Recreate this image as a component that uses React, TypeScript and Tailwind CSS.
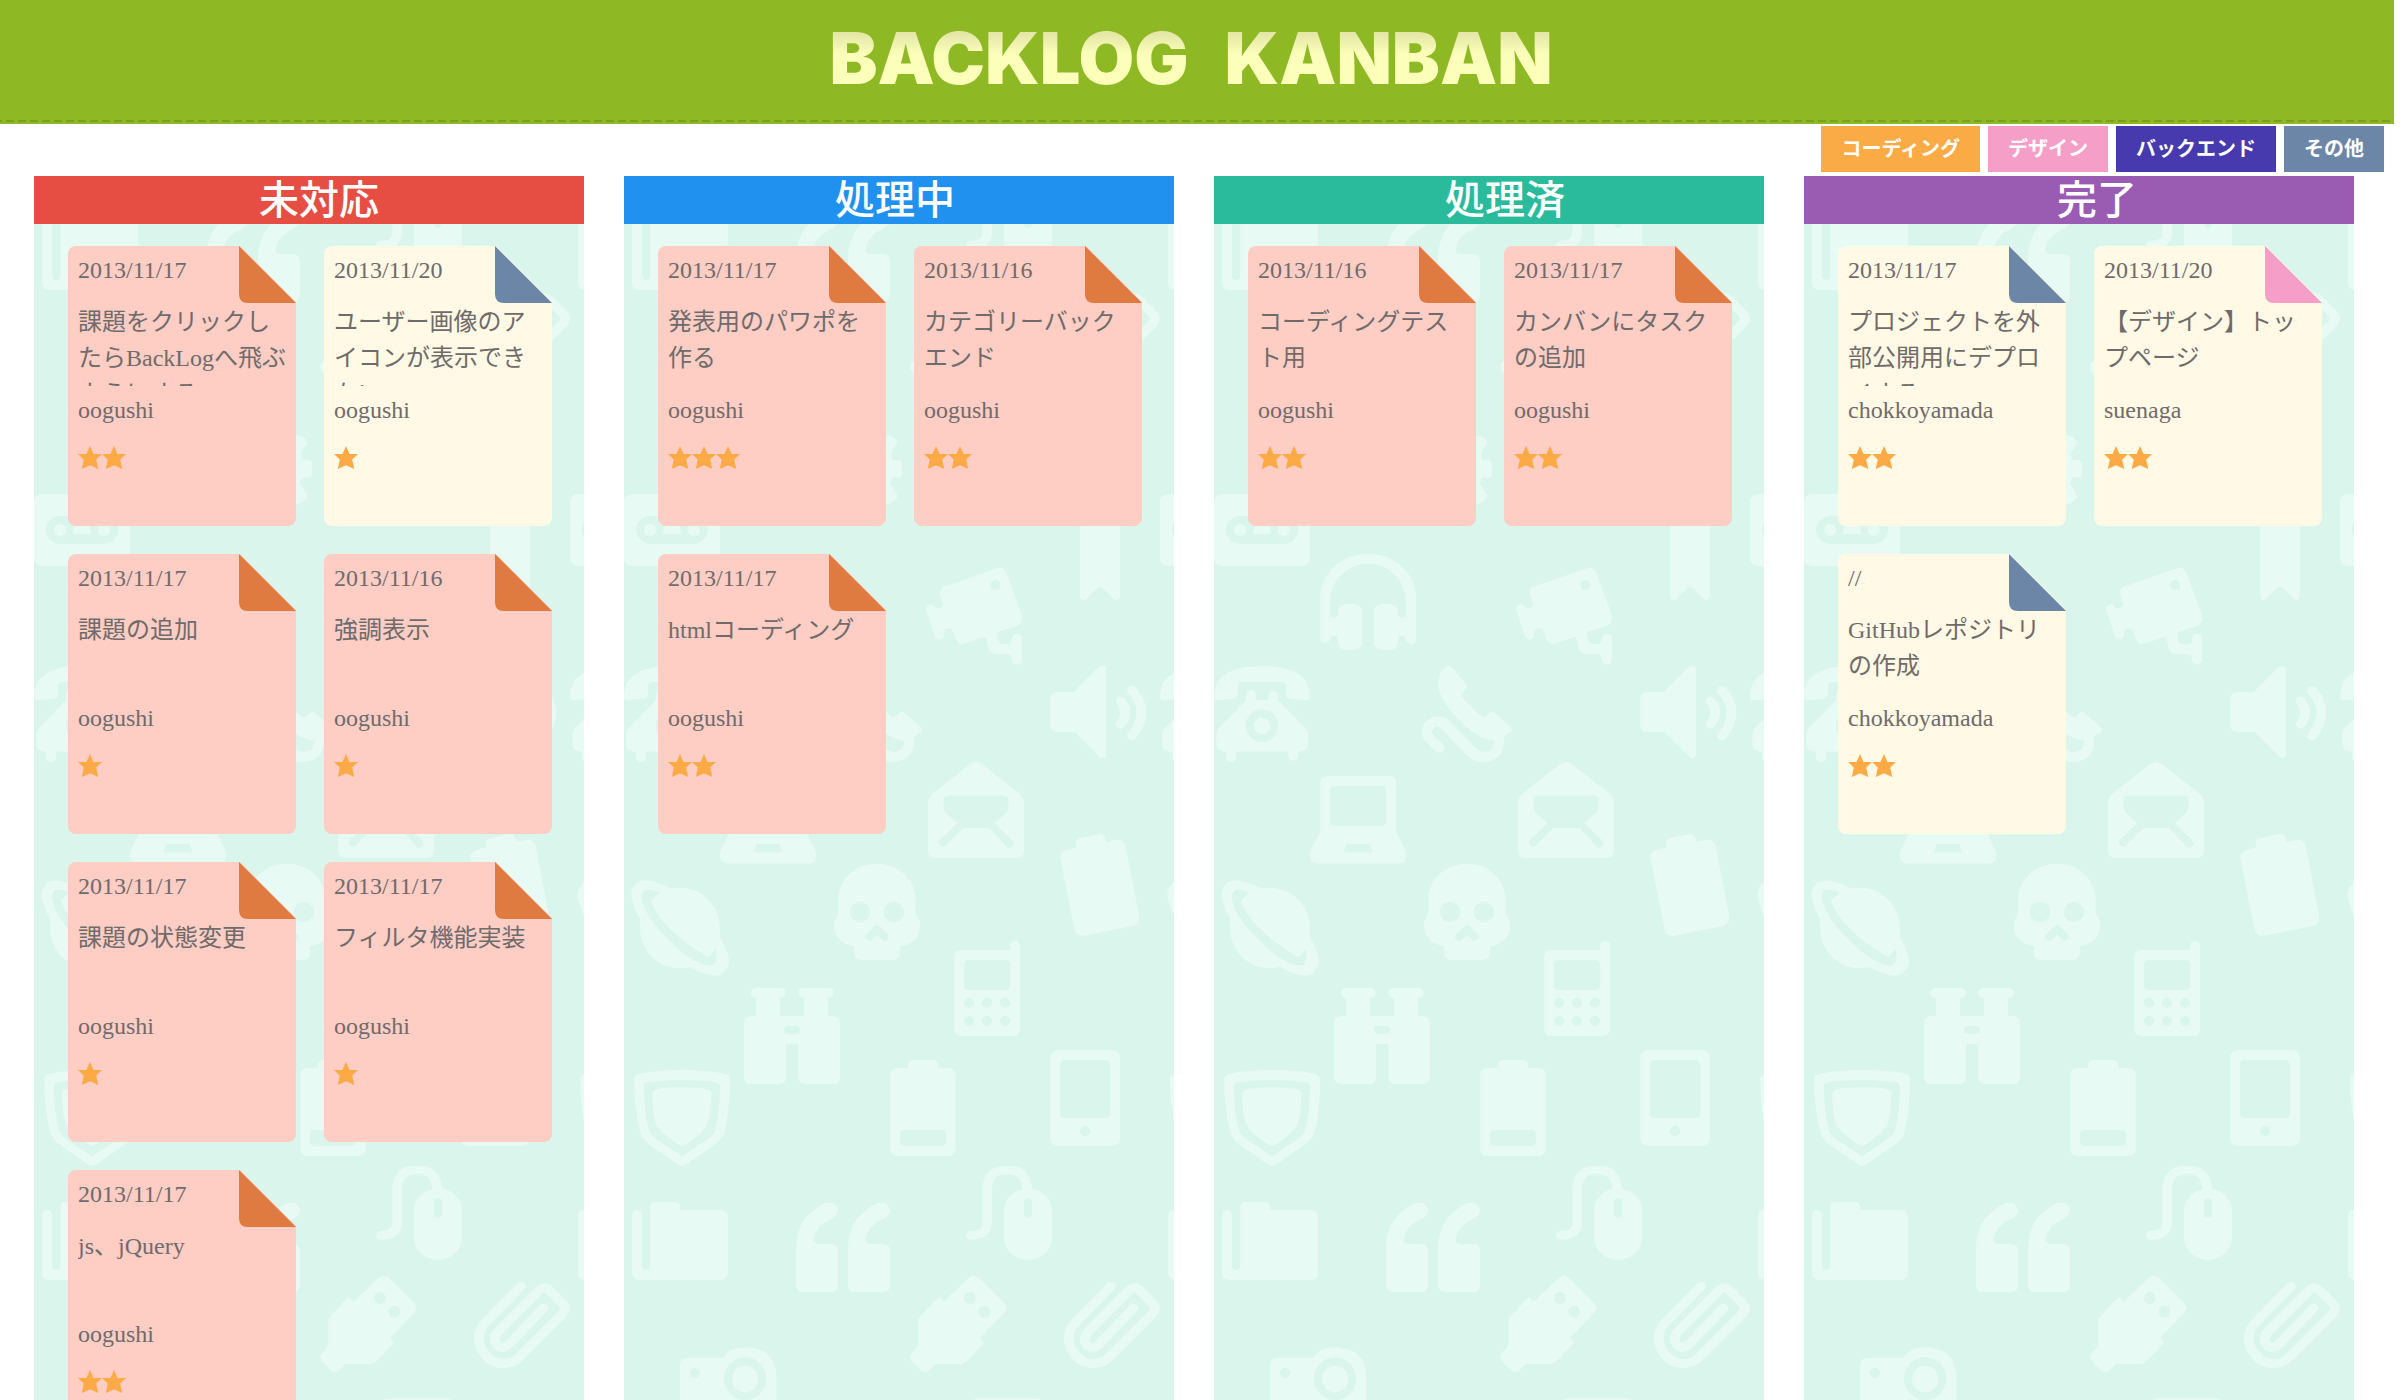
type Category = "backend" | "design" | "other";

type Task = {
  date: string;
  title: string;
  owner: string;
  stars: number;
  tone: "pink" | "cream";
  category: Category;
};

type ColumnData = { name: string; heading: string; tasks: Task[] };

const LIGHT = "#e8faf4";
const MINT = "#d9f5ec";

const foldColors: Record<Category, string> = {
  backend: "#df7a41",
  design: "#f59ec8",
  other: "#6c86a7",
};

const filters = [
  { label: "コーディング", color: "bg-[#fbab46]" },
  { label: "デザイン", color: "bg-[#f59ec8]" },
  { label: "バックエンド", color: "bg-[#463aae]" },
  { label: "その他", color: "bg-[#6c86a7]" },
];

function task(
  date: string,
  title: string,
  owner: string,
  stars: number,
  tone: Task["tone"] = "pink",
  category: Category = "backend",
): Task {
  return { date, title, owner, stars, tone, category };
}

const columns: ColumnData[] = [
  {
    name: "未対応",
    heading: "bg-[#e64d43] pl-5",
    tasks: [
      task("2013/11/17", "課題をクリックしたらBackLogへ飛ぶようにする", "oogushi", 2),
      task("2013/11/20", "ユーザー画像のアイコンが表示できない", "oogushi", 1, "cream", "other"),
      task("2013/11/17", "課題の追加", "oogushi", 1),
      task("2013/11/16", "強調表示", "oogushi", 1),
      task("2013/11/17", "課題の状態変更", "oogushi", 1),
      task("2013/11/17", "フィルタ機能実装", "oogushi", 1),
      task("2013/11/17", "js、jQuery", "oogushi", 2),
    ],
  },
  {
    name: "処理中",
    heading: "bg-[#2191f0] pr-2",
    tasks: [
      task("2013/11/17", "発表用のパワポを作る", "oogushi", 3),
      task("2013/11/16", "カテゴリーバックエンド", "oogushi", 2),
      task("2013/11/17", "htmlコーディング", "oogushi", 2),
    ],
  },
  {
    name: "処理済",
    heading: "bg-[#2abb9c] pl-8",
    tasks: [
      task("2013/11/16", "コーディングテスト用", "oogushi", 2),
      task("2013/11/17", "カンバンにタスクの追加", "oogushi", 2),
    ],
  },
  {
    name: "完了",
    heading: "bg-[#9a5bb3] pl-9",
    tasks: [
      task("2013/11/17", "プロジェクトを外部公開用にデプロイする", "chokkoyamada", 2, "cream", "other"),
      task("2013/11/20", "【デザイン】トップページ", "suenaga", 2, "cream", "design"),
      task("//", "GitHubレポジトリの作成", "chokkoyamada", 2, "cream", "other"),
    ],
  },
];

/** Repeating wallpaper of gadget icons, shared by every column. */
function WallpaperDefs() {
  const line = { fill: "none", stroke: LIGHT, strokeWidth: 27, strokeLinecap: "round", strokeLinejoin: "round" } as const;
  return (
    <svg className="absolute size-0" aria-hidden="true">
      <defs>
        <pattern
          id="gadgets"
          width="536"
          height="990"
          patternUnits="userSpaceOnUse"
          viewBox="0 0 1474 2970"
          preserveAspectRatio="none"
        >
          <rect width="1474" height="2970" fill={MINT} />

          <g transform="translate(-11 -648)" fill={LIGHT}>
            {/* mouse */}
            <path d="M965 856Q1010 856 1010 815V715Q1012 659 1065 659Q1118 659 1120 720" {...line} />
            <rect x="1056" y="715" width="132" height="215" rx="66" />
            <rect x="1111" y="744" width="22" height="59" rx="11" fill={MINT} />
            {/* folder */}
            <path d="M33 794A14 14 0 0 1 61 794V948A11 12 0 0 0 83 948V772Q83 756 97 756H151Q165 756 165 770V780H275Q297 780 297 802V968Q297 990 275 990H55Q33 990 33 968Z" />
            {/* quotation marks */}
            <path d="M484 890Q486 800 563 760Q590 750 600 778Q600 798 582 806Q540 825 532 868Q532 882 545 882H578Q600 882 600 904V1004Q600 1026 578 1026H506Q484 1026 484 1004Z" />
            <path
              transform="translate(143 0)"
              d="M484 890Q486 800 563 760Q590 750 600 778Q600 798 582 806Q540 825 532 868Q532 882 545 882H578Q600 882 600 904V1004Q600 1026 578 1026H506Q484 1026 484 1004Z"
            />
            {/* usb plug */}
            <path d="M960 982Q972 972 986 982L1056 1058Q1068 1072 1058 1088L990 1164L1002 1178L955 1232Q945 1242 932 1242H868L850 1262Q840 1270 828 1262L802 1234Q794 1222 802 1208L820 1188V1112Q820 1104 826 1098L877 1040L891 1055Z" />
            <ellipse cx="962" cy="1044" rx="16" ry="18" fill={MINT} />
            <ellipse cx="1002" cy="1085" rx="16" ry="18" fill={MINT} />
            {/* paperclip */}
            <path
              d="M1350 1009L1252 1118Q1224 1150 1240 1195Q1268 1252 1320 1238Q1335 1233 1345 1222L1464 1092Q1478 1076 1464 1060L1428 1020Q1415 1006 1401 1020L1288 1144Q1270 1166 1284 1184Q1300 1202 1318 1182L1412 1075"
              {...line}
            />
            {/* camera */}
            <path d="M187 1223H283Q300 1192 345 1192Q425 1195 430 1275V1460Q430 1480 408 1480H187Q165 1480 165 1458V1245Q165 1223 187 1223Z" />
            <ellipse cx="344" cy="1286" rx="58" ry="64" fill={MINT} />
            <ellipse cx="344" cy="1287" rx="36" ry="40" />
            <ellipse cx="206" cy="1269" rx="14" ry="15" fill={MINT} />
            <rect x="965" y="1345" width="200" height="240" rx="20" />
          </g>

          <g transform="translate(-11 -48)" fill={LIGHT}>
            {/* gear */}
            <path d="M650 825H732Q755 830 764 846L745 880L748 900H765Q776 902 776 912V942Q776 952 765 953H748L742 970L764 1008Q755 1028 732 1035H650Z" />
          </g>

          <g transform="translate(-11 1062)" fill={LIGHT}>
            {/* cassette */}
            <rect x="11" y="-108" width="264" height="216" rx="22" />
            <rect x="44" y="-42" width="198" height="84" rx="42" fill={MINT} />
            <ellipse cx="83" cy="0" rx="17" ry="18" />
            <ellipse cx="203" cy="0" rx="17" ry="18" />
            <path d="M122 -12H164L168 12H118Z" />
            {/* headphones */}
            <path d="M303 205C303 130 362 71 435 71S567 130 567 205V328A14 15 0 0 1 539 328A11 11 0 0 0 517 328V340A22 22 0 0 1 495 360H473A22 22 0 0 1 451 340V244A22 22 0 0 1 473 222H495A22 22 0 0 1 517 244V250A11 14 0 0 0 539 250V215C539 153 492 101 435 101S330 153 330 215V250A11 14 0 0 0 352 250V244A22 22 0 0 1 374 222H396A22 22 0 0 1 418 244V340A22 22 0 0 1 396 360H374A22 22 0 0 1 352 340V328A11 11 0 0 0 330 328A14 15 0 0 1 303 328Z" />
            {/* video camera */}
            <path d="M890 170L1038 114Q1057 110 1063 130L1105 255Q1110 280 1092 288L1037 307Q1037 342 1052 342H1066Q1078 342 1078 330V325A14 14 0 0 1 1106 325V390A14 14 0 0 1 1078 390Q1078 372 1062 372H1034Q1012 370 1012 345L1006 320L950 340Q935 346 927 332L912 296Q892 292 892 310Q892 326 880 329Q870 328 866 318L842 240Q842 222 858 222Q868 236 876 236L890 228L880 192Q878 176 890 170Z" />
            <ellipse cx="1032" cy="165" rx="14" ry="15" fill={MINT} />
            {/* bookmark */}
            <path d="M1265 -78H1375V200Q1372 212 1360 210L1330 176Q1320 168 1310 176L1280 210Q1266 212 1265 200Z" />
            {/* telephone */}
            <path d="M11 500Q10 408 143 408T275 500Q275 512 262 511L226 507Q209 505 209 492V470Q209 456 195 456H91Q77 456 77 470V492Q77 505 60 507L24 511Q11 512 11 500Z" />
            <path d="M99 510V494A14 15 0 0 1 127 494V510H160V494A14 15 0 0 1 187 494V510L262 593Q270 602 270 614V640Q270 665 248 665H242V682A14 14 0 0 1 215 682V665H72V682A14 14 0 0 1 44 682V665H40Q17 665 17 640V614Q17 602 25 593Z" />
            <ellipse cx="143" cy="587" rx="44" ry="49" fill={MINT} />
            <ellipse cx="143" cy="588" rx="23" ry="25" />
            {/* receiver */}
            <path d="M646 412Q656 402 666 412L705 464Q710 472 703 480L693 492Q690 498 695 504L742 556Q752 565 760 557L768 549Q776 542 784 549L826 590Q834 598 828 606L812 618Q808 622 809 635Q806 694 750 696Q726 696 708 678L638 598Q624 582 613 596Q606 606 616 617L640 643A14 15 0 0 1 620 664L592 634Q576 612 586 586Q604 552 640 560Q650 562 662 576L728 650Q742 668 758 665Q780 662 782 632Q730 628 670 552Q628 500 627 462Q628 430 646 412Z" />
            {/* speaker */}
            <path d="M1205 486H1248L1316 412Q1326 402 1337 412V678Q1330 690 1318 680L1250 606H1205Q1183 606 1183 584V508Q1183 486 1205 486Z" />
            <path d="M1377 514Q1402 546 1377 582M1408 481Q1460 546 1408 617" {...line} />
            {/* laptop */}
            <path d="M325 738H490Q512 738 512 760V906L536 956Q548 1001 516 1001H297Q266 998 278 956L303 906V760Q303 738 325 738Z" />
            <rect x="330" y="768" width="154" height="120" rx="12" fill={MINT} />
            <path d="M375 942H439L446 967H368Z" fill={MINT} />
            {/* mail */}
            <path d="M960 704Q979 688 998 704L1098 790Q1111 802 1111 820V962Q1111 984 1089 984H869Q847 984 847 962V820Q847 802 860 790Z" />
            <path
              fill={MINT}
              d="M903 797H1056Q1068 797 1068 809V834Q1068 840 1064 845L1030 880L1081 934A14 14 0 0 1 1066 953L1016 894H944L892 950A14 14 0 0 1 877 933L928 880L894 845Q890 840 890 834V809Q890 797 903 797Z"
            />
            {/* tilted battery */}
            <path d="M1254 952V940Q1252 930 1264 924L1320 912Q1337 912 1337 936L1364 930Q1384 926 1390 945L1428 1160Q1430 1180 1412 1188L1276 1217Q1256 1220 1250 1200L1211 985Q1208 968 1226 960Z" />
            {/* planet */}
            <path d="M140 1075Q80 1042 50 1056Q20 1080 38 1125Q44 1150 55 1165V1194C55 1261 104 1315 165 1315Q180 1315 192 1311Q250 1345 275 1335Q315 1310 290 1255Q285 1240 275 1222V1194C275 1127 226 1073 165 1073Q152 1073 140 1075Z" />
            <path
              fill={MINT}
              d="M108 1087Q60 1066 60 1100Q62 1150 130 1225Q200 1305 250 1307Q270 1305 264 1255L248 1277Q240 1284 228 1272Q120 1200 86 1118Q84 1110 90 1106Z"
            />
            {/* skull */}
            <path d="M600 1108C600 1048 648 1001 707 1001S813 1048 813 1108V1150Q826 1168 826 1190Q822 1240 770 1249V1268Q770 1290 748 1290H666Q644 1290 644 1268V1249Q592 1238 588 1190Q588 1168 600 1150Z" />
            <ellipse cx="660" cy="1146" rx="28" ry="30" fill={MINT} />
            <ellipse cx="753" cy="1146" rx="28" ry="30" fill={MINT} />
            <path fill={MINT} d="M700 1189Q708 1183 715 1189L735 1212A10 10 0 0 1 720 1228L708 1214L694 1228A10 10 0 0 1 678 1212Z" />
          </g>

          <g transform="translate(-11 2322)" fill={LIGHT}>
            {/* cell phone */}
            <path d="M941 0H1073V-17A14 14 0 0 1 1100 -17V236Q1100 258 1078 258H941Q919 258 919 236V22Q919 0 941 0Z" />
            <rect x="946" y="30" width="127" height="90" rx="12" fill={MINT} />
            {[158, 213].map((cy) =>
              [960, 1009, 1059].map((cx) => <ellipse key={`${cx}-${cy}`} cx={cx} cy={cy} rx="14" ry="15" fill={MINT} />),
            )}
            {/* binoculars */}
            <path d="M372 114H443A14 15 0 0 1 440 144V198H506V144A14 15 0 0 1 503 114H575A14 15 0 0 1 572 144V198H583Q605 198 605 220V380Q605 402 583 402H512Q490 402 490 380V282H457V380Q457 402 435 402H363Q341 402 341 380V220Q341 198 363 198H374V144A14 15 0 0 1 372 114Z" />
            <rect x="451" y="228" width="44" height="23" rx="11" fill={MINT} />
            {/* shield */}
            <path d="M39 385Q39 375 60 370Q171 348 285 370Q303 376 303 388Q303 480 288 545Q284 565 260 585L180 645Q171 650 162 645L82 585Q60 565 55 545Q39 480 39 385Z" />
            <path
              fill={MINT}
              d="M66 405Q66 400 82 396Q171 384 260 396Q275 400 275 408Q274 480 262 540Q258 555 240 568L171 619L100 568Q84 555 79 540Q66 480 66 405Z"
            />
            <path d="M88 430Q90 420 105 416Q171 408 236 416Q252 420 252 430Q250 490 242 520Q236 535 222 550Q192 578 171 589Q150 578 118 550Q104 535 98 520Q88 480 88 430Z" />
            {/* battery */}
            <path d="M792 354V346Q792 330 808 330H859Q875 330 875 346V354H901Q923 354 923 376V596Q923 618 901 618H765Q743 618 743 596V376Q743 354 765 354Z" />
            <rect x="770" y="540" width="127" height="47" rx="12" fill={MINT} />
            {/* smartphone */}
            <rect x="1183" y="300" width="192" height="288" rx="22" />
            <rect x="1210" y="330" width="138" height="174" rx="12" fill={MINT} />
            <ellipse cx="1279" cy="543" rx="14" ry="15" fill={MINT} />
          </g>
        </pattern>
      </defs>
    </svg>
  );
}

function Star() {
  return (
    <svg viewBox="0 0 24 24" className="size-6" fill="#fbaa45" aria-hidden="true">
      <path d="M12 0L15.5 8H24L18.2 13.6L20.2 23L12 19.2L3.8 23L5.8 13.6L0 8H8.500Z" />
    </svg>
  );
}

function Card({ item }: { item: Task }) {
  return (
    <li
      className={`relative h-[280px] rounded-lg px-2.5 pt-1.5 [clip-path:polygon(0_0,calc(100%_-_56px)_0,100%_56px,100%_100%,0_100%)] ${
        item.tone === "pink" ? "bg-[#fecdc4]" : "bg-[#fff9e5]"
      }`}
    >
      <svg viewBox="0 0 57 57" className="absolute top-0 right-0 size-[57px]" aria-hidden="true">
        <path d="M0 0L57 57H9Q0 57 0 48Z" fill={foldColors[item.category]} />
      </svg>
      <p>{item.date}</p>
      <h3 className="mt-4 h-[82px] overflow-hidden">{item.title}</h3>
      <p className="mt-1.5">{item.owner}</p>
      <div className="mt-[18px] flex" role="img" aria-label={`優先度 ${item.stars}`}>
        {Array.from({ length: item.stars }, (_, i) => (
          <Star key={i} />
        ))}
      </div>
    </li>
  );
}

function Column({ column }: { column: ColumnData }) {
  return (
    <section className="relative">
      <svg className="absolute inset-0 size-full" aria-hidden="true">
        <rect width="100%" height="100%" fill="url(#gadgets)" />
      </svg>
      <h2
        className={`relative flex h-12 items-center justify-center pb-1.5 font-['Noto_Sans_CJK_JP',sans-serif] text-[40px] leading-[42px] font-medium text-white ${column.heading}`}
      >
        {column.name}
      </h2>
      <ul className="relative grid grid-cols-2 gap-7 pt-[22px] pr-8 pb-7 pl-[34px]">
        {column.tasks.map((item, i) => (
          <Card key={i} item={item} />
        ))}
      </ul>
    </section>
  );
}

export default function App() {
  return (
    <div
      lang="ja"
      className="h-screen overflow-y-auto bg-white pr-3.5 font-['Liberation_Serif','Noto_Sans_CJK_JP',serif] text-2xl leading-9 text-[#6f6b6b] [scrollbar-width:none]"
    >
      <WallpaperDefs />
      <header className="flex h-[124px] flex-col bg-[#8eb925] pb-0.5">
        <h1 className="flex flex-1 items-center justify-center gap-9 pr-3 pb-1 font-['Inter',sans-serif] text-[72px] leading-[80px] font-black text-transparent">
          {["BACKLOG", "KANBAN"].map((word) => (
            <span
              key={word}
              className="bg-linear-to-b from-[#e4e7a6] from-20% to-[#fcffba] to-45% bg-clip-text"
            >
              {word}
            </span>
          ))}
        </h1>
        <div className="h-0.5 bg-[repeating-linear-gradient(90deg,#7ba01f_0_2px,transparent_2px_6px,#7ba01f_6px_12px)]" />
      </header>
      <nav className="flex justify-end gap-2 pt-0.5 pr-2.5 pb-1">
        {filters.map((f) => (
          <button
            key={f.label}
            type="button"
            className={`h-[46px] px-5 text-xl leading-[46px] font-bold text-white ${f.color}`}
          >
            {f.label}
          </button>
        ))}
      </nav>
      <main className="grid grid-cols-4 gap-10 pr-10 pl-[34px]">
        {columns.map((c) => (
          <Column key={c.name} column={c} />
        ))}
      </main>
    </div>
  );
}
